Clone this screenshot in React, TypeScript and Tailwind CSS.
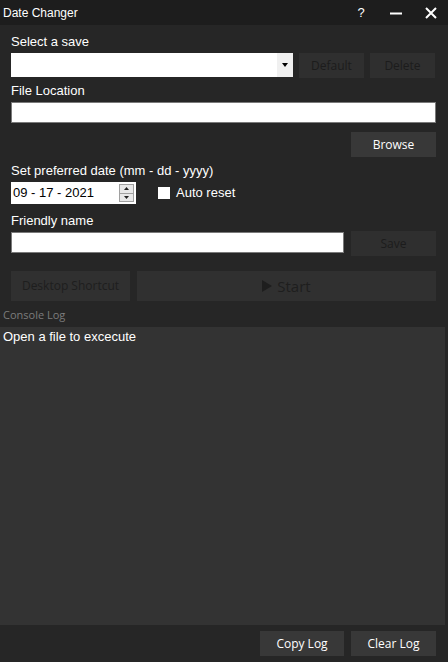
export default function App() {
  const label = "text-[13px] text-white h-[16px] leading-[16px]"
  const disabledBtn =
    "bg-[#2f2f2f] text-[#1c1c1c] text-[12px] flex items-center justify-center font-['Open_Sans',sans-serif]"
  const btn =
    "bg-[#383838] text-white text-[12px] flex items-center justify-center font-['Open_Sans',sans-serif]"

  return (
    <div className="w-[448px] h-[662px] bg-[#262626] flex flex-col font-['Liberation_Sans',Arial,sans-serif] overflow-hidden">
      {/* Title bar */}
      <div className="h-[25px] bg-[#1d1d1d] flex items-center pl-[3px] pr-[10px] shrink-0">
        <span className="text-[12px] text-white">Date Changer</span>
        <div className="ml-auto flex items-center">
          <span className="text-[13px] text-white w-[20px] text-center">?</span>
          <svg width="14" height="14" viewBox="0 0 14 14" className="ml-[18px]">
            <rect x="1" y="6.5" width="12" height="2" fill="white" />
          </svg>
          <svg width="14" height="14" viewBox="0 0 14 14" className="ml-[21px]">
            <path d="M2 2 L12 12 M12 2 L2 12" stroke="white" strokeWidth="2" />
          </svg>
        </div>
      </div>

      <div className="px-[11px] pr-[12px] flex flex-col shrink-0">
        {/* Select a save */}
        <div className={`${label} mt-[9px]`}>Select a save</div>
        <div className="flex mt-[3px] gap-[6px]">
          <div className="w-[282px] h-[24px] bg-white flex justify-end">
            <div className="w-[16px] h-[24px] bg-[#f0f0f0] flex items-center justify-center">
              <svg width="6" height="4" viewBox="0 0 6 4">
                <path d="M0 0 H6 L3 4 Z" fill="black" />
              </svg>
            </div>
          </div>
          <div className={`${disabledBtn} w-[65px] h-[25px]`}>Default</div>
          <div className={`${disabledBtn} w-[65px] h-[25px]`}>Delete</div>
        </div>

        {/* File location */}
        <div className={`${label} mt-[5px]`}>File Location</div>
        <div className="mt-[3px] h-[21px] bg-white border border-[#7a7a7a]" />

        <div className="flex justify-end mt-[9px]">
          <div className={`${btn} w-[85px] h-[25px]`}>Browse</div>
        </div>

        {/* Date */}
        <div className={`${label} mt-[6px]`}>Set preferred date (mm - dd - yyyy)</div>
        <div className="flex items-center mt-[3px]">
          <div className="w-[125px] h-[22px] bg-white flex items-center pl-[2px] pr-[2px]">
            <span className="text-[13px] text-black flex-1">09 - 17 - 2021</span>
            <div className="w-[15px] h-[18px] flex flex-col border border-[#a0a0a0] bg-[#e8e8e8]">
              <div className="flex-1 flex items-center justify-center border-b border-[#a0a0a0]">
                <svg width="5" height="3" viewBox="0 0 5 3">
                  <path d="M0 3 L2.5 0 L5 3 Z" fill="#222" />
                </svg>
              </div>
              <div className="flex-1 flex items-center justify-center">
                <svg width="5" height="3" viewBox="0 0 5 3">
                  <path d="M0 0 H5 L2.5 3 Z" fill="#222" />
                </svg>
              </div>
            </div>
          </div>
          <div className="w-[12px] h-[12px] bg-white ml-[22px]" />
          <span className="text-[13px] text-white ml-[6px]">Auto reset</span>
        </div>

        {/* Friendly name */}
        <div className={`${label} mt-[9px]`}>Friendly name</div>
        <div className="flex items-start mt-[2px] gap-[7px]">
          <div className="w-[333px] h-[21px] mt-[1px] bg-white border border-[#7a7a7a]" />
          <div className={`${disabledBtn} w-[85px] h-[25px]`}>Save</div>
        </div>

        {/* Action buttons */}
        <div className="flex mt-[15px] gap-[7px]">
          <div className={`${disabledBtn} w-[119px] h-[30px] bg-[#303030] text-[#1e1e1e]`}>
            Desktop Shortcut
          </div>
          <div className="flex-1 h-[30px] bg-[#303030] text-[#1e1e1e] text-[15px] flex items-center justify-center gap-[5px] font-['Open_Sans',sans-serif]">
            <svg width="10" height="12" viewBox="0 0 10 12">
              <path d="M0 0 L10 6 L0 12 Z" fill="#1e1e1e" />
            </svg>
            Start
          </div>
        </div>
      </div>

      {/* Console */}
      <div className="text-[11px] text-[#7c7c7c] pl-[3px] mt-[6px] h-[16px] leading-[16px] font-['Open_Sans',sans-serif] shrink-0">
        Console Log
      </div>
      <div className="w-[445px] h-[298px] mt-[4px] bg-[#333333] shrink-0 px-[3px] pt-[1px] leading-[16px]">
        <span className="text-[13px] text-white">Open a file to excecute</span>
      </div>

      <div className="flex justify-end gap-[7px] pr-[12px] mt-[6px] shrink-0">
        <div className={`${btn} w-[84px] h-[25px]`}>Copy Log</div>
        <div className={`${btn} w-[85px] h-[25px]`}>Clear Log</div>
      </div>
    </div>
  )
}
